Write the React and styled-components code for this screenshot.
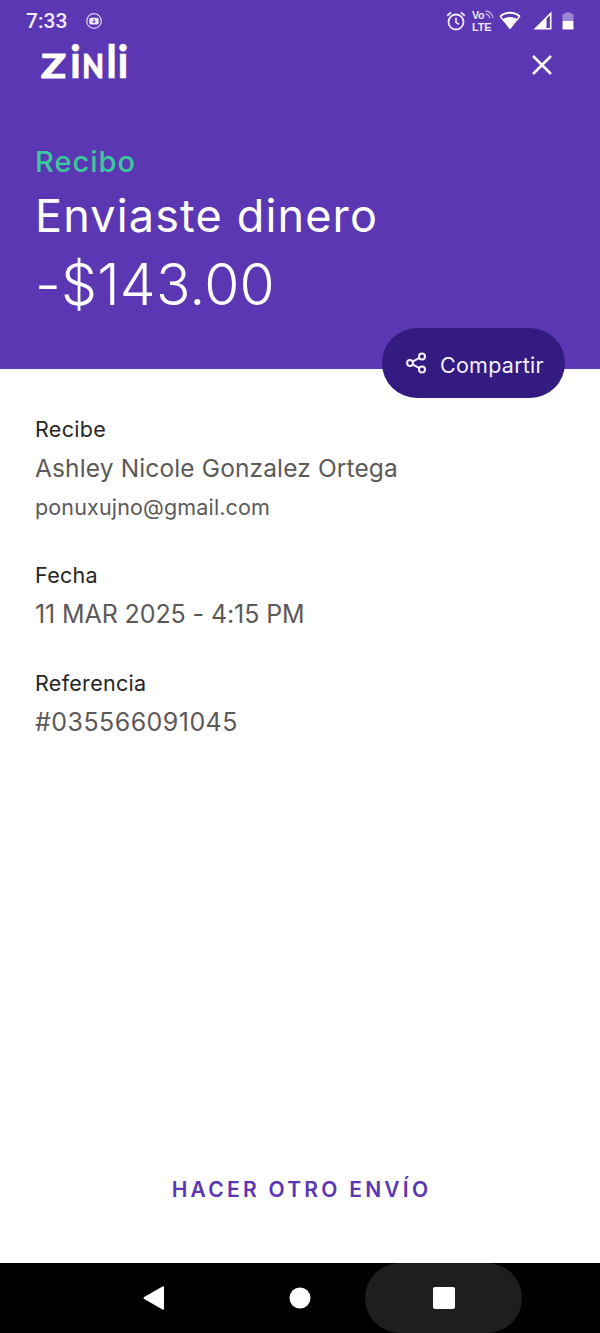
import { createGlobalStyle, styled } from 'styled-components';

const GlobalStyle = createGlobalStyle`
    * {
        box-sizing: border-box;
        margin: 0;
        padding: 0;
    }
    body {
        background-color: #fff;
        font-family: Inter, 'Noto Sans', sans-serif;
    }
    button {
        border: none;
        background: none;
        font: inherit;
        color: inherit;
    }
    svg {
        display: block;
        flex-shrink: 0;
    }
`;

const Screen = styled.div`
    width: 600px;
    height: 1333px;
    display: flex;
    flex-direction: column;
    overflow: hidden;
`;

const Header = styled.header`
    position: relative;
    height: 369px;
    background-color: #5b37b4;
    color: #fff;
`;

const StatusBar = styled.div`
    height: 42px;
    padding: 0 26px;
    display: flex;
    align-items: center;
`;

const Clock = styled.span`
    width: 59px;
    font-family: Roboto, sans-serif;
    font-size: 21px;
    font-weight: 500;
    line-height: 43px;
    color: #efe9fb;
`;

const StatusIcons = styled.div`
    margin-left: auto;
    padding-bottom: 1px;
    display: flex;
    align-items: center;
`;

const Volte = styled.div`
    width: 27px;
    margin-left: 6px;
    font-family: 'Liberation Sans', sans-serif;
    font-size: 11px;
    font-weight: 700;
    line-height: 12px;
    letter-spacing: -0.2px;
    color: #efe9fb;
`;

const VolteTop = styled.div`
    display: flex;
    gap: 1px;
    font-size: 10.5px;
`;

const Gap = styled.span`
    width: ${(props) => (props.$small ? 10 : 12)}px;
`;

const TopBar = styled.div`
    height: 46px;
    padding: 0 46px 0 40px;
    display: flex;
    justify-content: space-between;
`;

const Logo = styled.div`
    display: flex;
    align-items: baseline;
    font-family: Lato, sans-serif;
    line-height: 38px;
`;

const Letter = styled.span`
    width: ${(props) => props.$width}px;
    display: flex;
    justify-content: center;
    font-size: ${(props) => (props.$cap ? 33 : 45)}px;
    font-weight: ${(props) => (props.$cap ? 900 : 700)};
    transform: scaleX(${(props) => props.$stretch || 1});
    -webkit-text-stroke: ${(props) => (props.$cap ? 0.9 : 0.3)}px #fff;
`;

const CloseButton = styled.button`
    width: 25px;
    height: 46px;
    display: flex;
    align-items: center;
    justify-content: center;
`;

const Summary = styled.div`
    padding: 54px 35px 0;
    white-space: nowrap;
`;

const Kind = styled.p`
    font-size: 29px;
    font-weight: 500;
    line-height: 40px;
    letter-spacing: 1px;
    color: #3cc79c;
`;

const Title = styled.h1`
    font-size: 45px;
    font-weight: 400;
    line-height: 68px;
    letter-spacing: 1.15px;
`;

const Amount = styled.p`
    font-size: 57px;
    font-weight: 300;
    line-height: 69px;
    letter-spacing: 0.2px;
`;

const ShareButton = styled.button`
    position: absolute;
    right: 35px;
    bottom: -29px;
    width: 183px;
    height: 70px;
    padding: 3px 0 0 24px;
    display: flex;
    align-items: center;
    gap: 13px;
    border-radius: 35px;
    background-color: #331b82;
    color: #f3effc;
    font-size: 21.5px;
    letter-spacing: 0.25px;
    svg {
        margin-top: -4px;
    }
`;

const Details = styled.main`
    flex: 1;
    padding: 40.5px 35px 0;
    display: flex;
    flex-direction: column;
    gap: 29.5px;
`;

const Group = styled.section`
    line-height: 39px;
    white-space: nowrap;
`;

const Label = styled.h2`
    font-size: 21.5px;
    font-weight: 400;
    letter-spacing: 0.3px;
    color: #262626;
`;

const Value = styled.p`
    font-size: ${(props) => props.$size}px;
    letter-spacing: ${(props) => props.$space}px;
    color: #5d5959;
`;

const AgainButton = styled.button`
    align-self: center;
    height: 40px;
    margin: 0 0 53px 3px;
    font-size: 21px;
    font-weight: 600;
    line-height: 40px;
    letter-spacing: 3.25px;
    color: #5b37b4;
`;

const NavBar = styled.nav`
    height: 70px;
    padding-left: 75px;
    display: flex;
    background-color: #000;
`;

const NavButton = styled.button`
    width: ${(props) => props.$width}px;
    height: 70px;
    padding-left: ${(props) => props.$shift || 0}px;
    display: flex;
    align-items: center;
    justify-content: center;
    border-radius: 35px;
    background-color: ${(props) => (props.$pressed ? '#1e1e1e' : '#000')};
`;

const details = [
    {
        label: 'Recibe',
        lines: [
            { text: 'Ashley Nicole Gonzalez Ortega', size: 24.5, space: 0.13 },
            { text: 'ponuxujno@gmail.com', size: 21.5, space: 0.15 },
        ],
    },
    {
        label: 'Fecha',
        lines: [{ text: '11 MAR 2025 - 4:15 PM', size: 25, space: -0.1 }],
    },
    {
        label: 'Referencia',
        lines: [{ text: '#035566091045', size: 25, space: 0.45 }],
    },
];

function RecordIcon() {
    return (
        <svg width="18" height="18" viewBox="0 0 18 18" fill="none">
            <circle cx="9" cy="9" r="7.3" stroke="#d9cdf3" strokeWidth="1.3" />
            <rect x="4.3" y="5.8" width="9.4" height="6.6" rx="1.6" fill="#efe9fb" />
            <path d="M9 7v3.6M7.5 9.3 9 10.9l1.5-1.6" stroke="#5b37b4" strokeWidth="1" />
        </svg>
    );
}

function AlarmIcon() {
    return (
        <svg width="20" height="20" viewBox="0 0 20 20" fill="none" stroke="#efe9fb">
            <circle cx="10" cy="11" r="7.5" strokeWidth="1.8" />
            <path d="M10 6.8v4.6l3 2" strokeWidth="1.7" />
            <path d="M1.2 4.7 5 1.4M18.8 4.7 15 1.4" strokeWidth="1.8" />
        </svg>
    );
}

function WavesIcon() {
    return (
        <svg width="9" height="10" viewBox="0 0 9 10" fill="none" stroke="#c9baec">
            <path d="M.5 2.200a7 7 0 0 1 7.500 7M.5 5.200a4 4 0 0 1 4.200 4" strokeWidth="1.2" />
        </svg>
    );
}

function WifiIcon() {
    return (
        <svg width="22" height="19" viewBox="0 0 22 19">
            <path d="M11 6c3 0 5.700.9 7.900 2.400L11 18.400 3.100 8.400C5.300 6.900 8 6 11 6Z" fill="#fff" />
            <path d="M1.400 5.200Q5.600 1.700 11 1.700t9.600 3.500" fill="none" stroke="#fff" strokeWidth="2" />
            <path d="M1 4.800 4 9M21 4.800 18 9" stroke="#fff" strokeWidth="1.3" />
        </svg>
    );
}

function SignalIcon() {
    return (
        <svg width="19" height="19" viewBox="0 0 19 19">
            <path d="M18.500.5v18H.5Z" fill="#fff" />
            <path d="M13.500 7.700 16.900 4.300V16.900H13.500Z" fill="#5b37b4" />
        </svg>
    );
}

function BatteryIcon() {
    return (
        <svg width="12" height="18" viewBox="0 0 12 18">
            <path d="M3 .5h6V2h2.500v7H.5V2H3Z" fill="#9d86d3" />
            <path d="M.5 9h11v8.500H.5Z" fill="#fff" />
        </svg>
    );
}

function ShareIcon() {
    return (
        <svg width="21" height="22" viewBox="0 0 21 22" fill="none" stroke="#f3effc" strokeWidth="2">
            <circle cx="4" cy="11" r="2.900" />
            <circle cx="16" cy="4.500" r="3" />
            <circle cx="16" cy="17.500" r="3" />
            <path d="m6.600 9.600 6.800-3.700M6.600 12.400l6.800 3.700" />
        </svg>
    );
}

export default function App() {
    return (
        <>
            <GlobalStyle />
            <Screen>
                <Header>
                    <StatusBar>
                        <Clock>7:33</Clock>
                        <RecordIcon />
                        <StatusIcons>
                            <AlarmIcon />
                            <Volte>
                                <VolteTop>
                                    Vo
                                    <WavesIcon />
                                </VolteTop>
                                LTE
                            </Volte>
                            <WifiIcon />
                            <Gap />
                            <SignalIcon />
                            <Gap $small />
                            <BatteryIcon />
                        </StatusIcons>
                    </StatusBar>
                    <TopBar>
                        <Logo>
                            <Letter $width={27} $cap $stretch={1.25}>
                                Z
                            </Letter>
                            <Letter $width={17}>i</Letter>
                            <Letter $width={18} $cap $stretch={0.85}>
                                N
                            </Letter>
                            <Letter $width={19}>l</Letter>
                            <Letter $width={4}>i</Letter>
                        </Logo>
                        <CloseButton aria-label="Cerrar">
                            <svg width="20" height="20" viewBox="0 0 20 20" stroke="#fff" strokeWidth="2.5">
                                <path d="M1 1l18 18M19 1 1 19" />
                            </svg>
                        </CloseButton>
                    </TopBar>
                    <Summary>
                        <Kind>Recibo</Kind>
                        <Title>Enviaste dinero</Title>
                        <Amount>-$143.00</Amount>
                    </Summary>
                    <ShareButton>
                        <ShareIcon />
                        Compartir
                    </ShareButton>
                </Header>
                <Details>
                    {details.map((group) => (
                        <Group key={group.label}>
                            <Label>{group.label}</Label>
                            {group.lines.map((line) => (
                                <Value key={line.text} $size={line.size} $space={line.space}>
                                    {line.text}
                                </Value>
                            ))}
                        </Group>
                    ))}
                </Details>
                <AgainButton>HACER OTRO ENVÍO</AgainButton>
                <NavBar>
                    <NavButton $width={157}>
                        <svg width="22" height="24" viewBox="0 0 22 24" fill="#fff">
                            <path d="M1.200 11 19.500.5q1.500-.7 1.500 1v21q0 1.700-1.500 1L1.200 13q-1.400-1 0-2Z" />
                        </svg>
                    </NavButton>
                    <NavButton $width={133} $shift={3}>
                        <svg width="22" height="22" viewBox="0 0 22 22" fill="#fff">
                            <circle cx="11" cy="11" r="10.500" />
                        </svg>
                    </NavButton>
                    <NavButton $width={157} $pressed>
                        <svg width="22" height="22" viewBox="0 0 22 22" fill="#fff">
                            <rect width="22" height="22" rx="2" />
                        </svg>
                    </NavButton>
                </NavBar>
            </Screen>
        </>
    );
}
